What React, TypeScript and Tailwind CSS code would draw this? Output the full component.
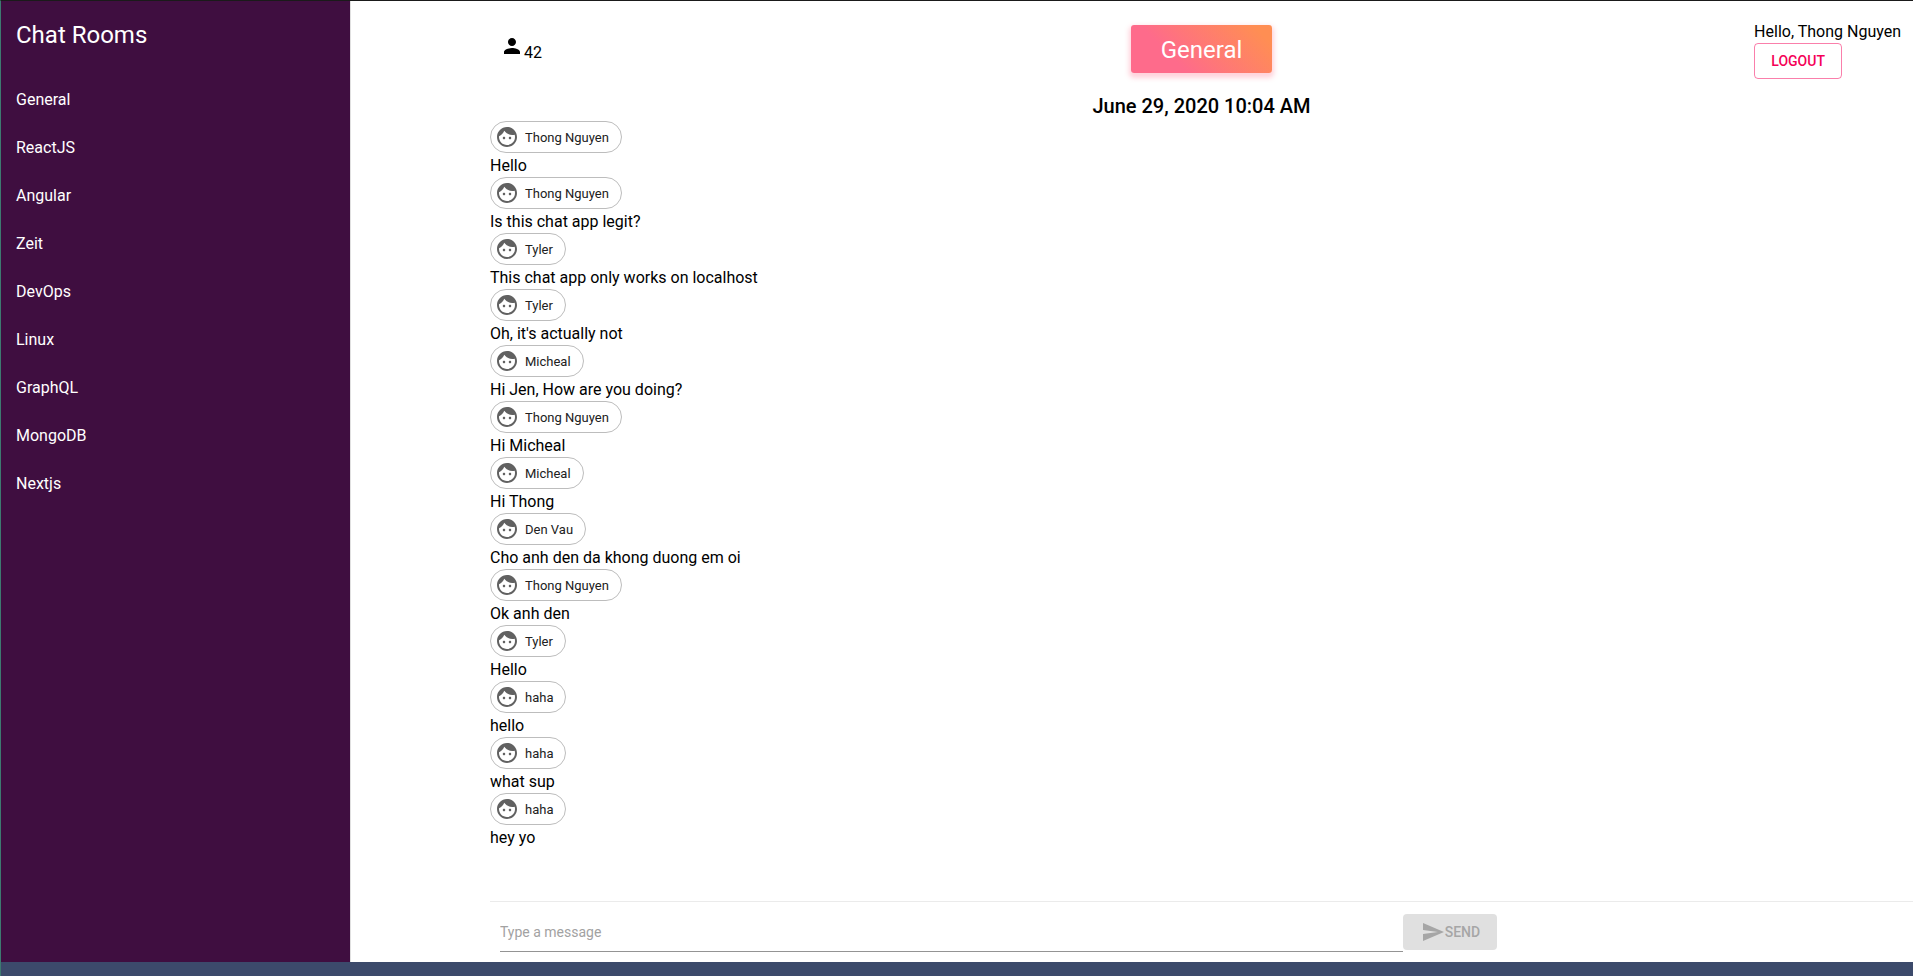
import { useState, type FormEvent } from "react";

const rooms = ["General", "ReactJS", "Angular", "Zeit", "DevOps", "Linux", "GraphQL", "MongoDB", "Nextjs"];

const messages = [
  { author: "Thong Nguyen", text: "Hello" },
  { author: "Thong Nguyen", text: "Is this chat app legit?" },
  { author: "Tyler", text: "This chat app only works on localhost" },
  { author: "Tyler", text: "Oh, it's actually not" },
  { author: "Micheal", text: "Hi Jen, How are you doing?" },
  { author: "Thong Nguyen", text: "Hi Micheal" },
  { author: "Micheal", text: "Hi Thong" },
  { author: "Den Vau", text: "Cho anh den da khong duong em oi" },
  { author: "Thong Nguyen", text: "Ok anh den" },
  { author: "Tyler", text: "Hello" },
  { author: "haha", text: "hello" },
  { author: "haha", text: "what sup" },
  { author: "haha", text: "hey yo" },
];

const PERSON =
  "M12 12c2.21 0 4-1.79 4-4s-1.79-4-4-4-4 1.79-4 4 1.79 4 4 4zm0 2c-2.67 0-8 1.34-8 4v2h16v-2c0-2.66-5.33-4-8-4z";
const SEND = "M2.01 21L23 12 2.01 3 2 10l15 2-15 2z";
const FACE =
  "M9 11.75c-.69 0-1.25.56-1.25 1.25s.56 1.25 1.25 1.25 1.25-.56 1.25-1.25-.56-1.25-1.25-1.25zm6 0c-.69 0-1.25.56-1.25 1.25s.56 1.25 1.25 1.25 1.25-.56 1.25-1.25-.56-1.25-1.25-1.25zM12 2C6.48 2 2 6.48 2 12s4.48 10 10 10 10-4.48 10-10S17.52 2 12 2zm0 18c-4.41 0-8-3.59-8-8 0-.29.02-.58.05-.86 2.36-1.05 4.23-2.98 5.21-5.37C11.07 8.33 14.05 10 17.42 10c.78 0 1.53-.09 2.25-.26.21.71.33 1.47.33 2.26 0 4.41-3.59 8-8 8z";

function Icon({ path, className = "" }: { path: string; className?: string }) {
  return (
    <svg viewBox="0 0 24 24" aria-hidden="true" className={`size-6 shrink-0 fill-current ${className}`}>
      <path d={path} />
    </svg>
  );
}

function Sidebar() {
  return (
    <nav aria-label="Chat rooms" className="w-[350px] shrink-0 border-r border-[#e0e0e0] bg-[#3f0e40] text-white">
      <h1 className="px-[15px] pt-[18px] text-2xl leading-8 font-normal">Chat Rooms</h1>
      <ul className="pt-[25px]">
        {rooms.map((room) => (
          <li key={room}>
            <a href={`#${room}`} className="block px-[15px] py-3 text-base">
              {room}
            </a>
          </li>
        ))}
      </ul>
    </nav>
  );
}

function Header() {
  return (
    <header className="grid grid-cols-[1fr_auto_1fr] items-start">
      <div className="flex items-baseline pt-[33px] pl-[10px]">
        <Icon path={PERSON} />
        <span>42</span>
      </div>
      <h2 className="mt-6 rounded-[3px] bg-[linear-gradient(45deg,#fe6b8b_30%,#ff8e53_90%)] px-[30px] pt-[2px] text-2xl leading-[46px] font-normal text-white shadow-[0_3px_5px_2px_rgba(255,105,135,0.3)]">
        General
      </h2>
      <div className="justify-self-end pt-[18px] pr-3">
        <p className="pt-[2px] leading-[22px]">Hello, Thong Nguyen</p>
        <button
          type="button"
          className="h-9 w-[88px] rounded border border-[#f50057]/50 text-sm font-medium text-[#f50057]"
        >
          LOGOUT
        </button>
      </div>
    </header>
  );
}

function Composer() {
  const [draft, setDraft] = useState("");
  const empty = draft.trim() === "";

  function submit(event: FormEvent) {
    event.preventDefault();
    setDraft("");
  }

  return (
    <div className="border-t border-[#ebebeb] pt-3 pb-[10px]">
      <form onSubmit={submit} className="flex w-5/7 items-start pl-[10px] pr-[9px]">
        <input
          type="text"
          aria-label="Type a message"
          placeholder="Type a message"
          value={draft}
          onChange={(event) => setDraft(event.target.value)}
          className="h-[38px] min-w-0 flex-1 border-b border-[#949494] pb-[2px] text-sm outline-none placeholder:text-[#a2a2a2]"
        />
        <button
          type="submit"
          disabled={empty}
          className="flex h-9 w-[94px] items-center justify-center rounded bg-[#3f51b5] text-sm font-medium text-white disabled:bg-[#e0e0e0] disabled:text-[#a6a6a6]"
        >
          <Icon path={SEND} />
          SEND
        </button>
      </form>
    </div>
  );
}

export default function App() {
  return (
    <div className="flex min-h-screen flex-col border-t border-l border-t-[#1a1a1a] border-l-[#3d7a70] bg-white font-[Roboto,sans-serif] text-base text-black">
      <div className="flex flex-1">
        <Sidebar />
        <main className="flex min-w-0 flex-1 flex-col pl-[139px]">
          <Header />
          <section aria-label="Messages" className="flex-1 pt-[10px]">
            <h3 className="pt-[2px] text-center text-xl leading-[30px] font-medium">June 29, 2020 10:04 AM</h3>
            <ul>
              {messages.map((message, index) => (
                <li key={index}>
                  <div className="flex h-8 w-fit items-center rounded-full border border-[#bdbdbd] pr-3 pl-1 text-[13px] text-[#212121]">
                    <Icon path={FACE} className="mr-[6px] text-[#616161]" />
                    <span className="pt-[2px]">{message.author}</span>
                  </div>
                  <p className="pt-[2px] leading-[22px]">{message.text}</p>
                </li>
              ))}
            </ul>
          </section>
          <Composer />
        </main>
      </div>
      <footer className="h-[14px] bg-[#3c4a6b]" />
    </div>
  );
}
